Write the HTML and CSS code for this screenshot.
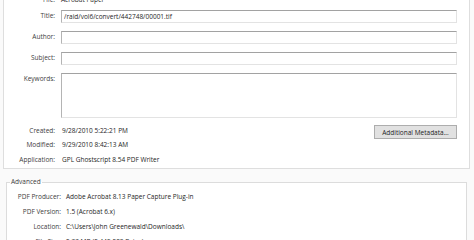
FILE: index.html
```html
<!DOCTYPE html>
<html>

<head>
    <meta content="text/html; charset=utf-8" http-equiv="Content-Type">
    <title>Document Properties</title>
    <link rel="stylesheet" href="styles.css">
</head>

<body>
    <div class="dialog">
        <div class="panel">
            <div class="field fileRow">
                <span class="label">File:</span>
                <span class="value">Acrobat Paper</span>
            </div>
            <div class="field boxRow">
                <label class="label" for="title">Title:</label>
                <input class="box" id="title" type="text" value="/raid/vol6/convert/442748/00001.tif">
            </div>
            <div class="field boxRow">
                <label class="label" for="author">Author:</label>
                <input class="box" id="author" type="text" value="">
            </div>
            <div class="field boxRow">
                <label class="label" for="subject">Subject:</label>
                <input class="box" id="subject" type="text" value="">
            </div>
            <div class="field boxRow">
                <label class="label" for="keywords">Keywords:</label>
                <textarea class="box area" id="keywords"></textarea>
            </div>
            <div class="info">
                <div class="infoRow">
                    <span class="label">Created:</span>
                    <span class="value">9/28/2010 5:22:21 PM</span>
                    <button class="metaButton">Additional Metadata...</button>
                </div>
                <div class="infoRow">
                    <span class="label">Modified:</span>
                    <span class="value">9/29/2010 8:42:13 AM</span>
                </div>
                <div class="infoRow">
                    <span class="label">Application:</span>
                    <span class="value">GPL Ghostscript 8.54 PDF Writer</span>
                </div>
            </div>
        </div>

        <fieldset class="group">
            <legend>Advanced</legend>
            <div class="advRow">
                <span class="label">PDF Producer:</span>
                <span class="value">Adobe Acrobat 8.13 Paper Capture Plug-in</span>
            </div>
            <div class="advRow">
                <span class="label">PDF Version:</span>
                <span class="value">1.5 (Acrobat 6.x)</span>
            </div>
            <div class="advRow">
                <span class="label">Location:</span>
                <span class="value">C:\Users\John Greenewald\Downloads\</span>
            </div>
            <div class="advRow">
                <span class="label">File Size:</span>
                <span class="value">2.33 MB (2,445,208 Bytes)</span>
            </div>
        </fieldset>
    </div>
</body>

</html>
```

FILE: styles.css
```css
* {
    box-sizing: border-box;
}

body {
    margin: 0;
    background: #fafafa;
    font-family: "Open Sans", "Noto Sans", sans-serif;
    font-size: 6.5px;
    color: #1e1e1e;
    overflow: hidden;
}

.dialog {
    width: 474px;
    padding-left: 3px;
}

.panel {
    width: 467px;
    margin-top: -6px;
    padding-bottom: 1px;
    background: #fff;
    border: 1px solid #dedede;
    border-top: none;
}

.field {
    display: grid;
    grid-template-columns: 51px 396px;
    column-gap: 6px;
    align-items: start;
}

.label {
    text-align: right;
    color: #3c3c3c;
    line-height: 12px;
    white-space: nowrap;
}

.value {
    line-height: 12px;
    white-space: nowrap;
}

.fileRow {
    height: 12px;
}

.boxRow {
    margin-top: 8px;
}

.fileRow + .boxRow {
    margin-top: 4px;
}

.box {
    display: block;
    width: 396px;
    height: 13px;
    margin: 0;
    padding: 0 2px;
    font-family: inherit;
    font-size: inherit;
    color: #1e1e1e;
    background: #fff;
    border: 1px solid #e3e3e3;
    border-top-color: #a2a2a2;
    border-left-color: #b4b4b4;
    outline: none;
}

.area {
    height: 45px;
    resize: none;
}

.info {
    margin-top: 4px;
}

.infoRow {
    display: grid;
    grid-template-columns: 51px 1fr 83px;
    column-gap: 7px;
    height: 15px;
    padding-right: 12px;
    align-items: center;
}

.infoRow .value {
    align-self: center;
}

.metaButton {
    align-self: start;
    height: 14px;
    margin-top: 3px;
    padding: 0;
    font-family: inherit;
    font-size: inherit;
    color: #222;
    background: #e1e1e1;
    border: 1px solid #adadad;
}

.group {
    width: 461px;
    margin: 7px 0 0 3px;
    padding: 1px 0 0 3px;
    background: #fff;
    border: 1px solid #dcdcdc;
    border-bottom: none;
}

.group legend {
    padding: 0 1px;
    line-height: 12px;
    color: #3c3c3c;
}

.advRow {
    display: grid;
    grid-template-columns: 51px 1fr;
    column-gap: 5px;
    height: 15px;
    align-items: center;
}
```
